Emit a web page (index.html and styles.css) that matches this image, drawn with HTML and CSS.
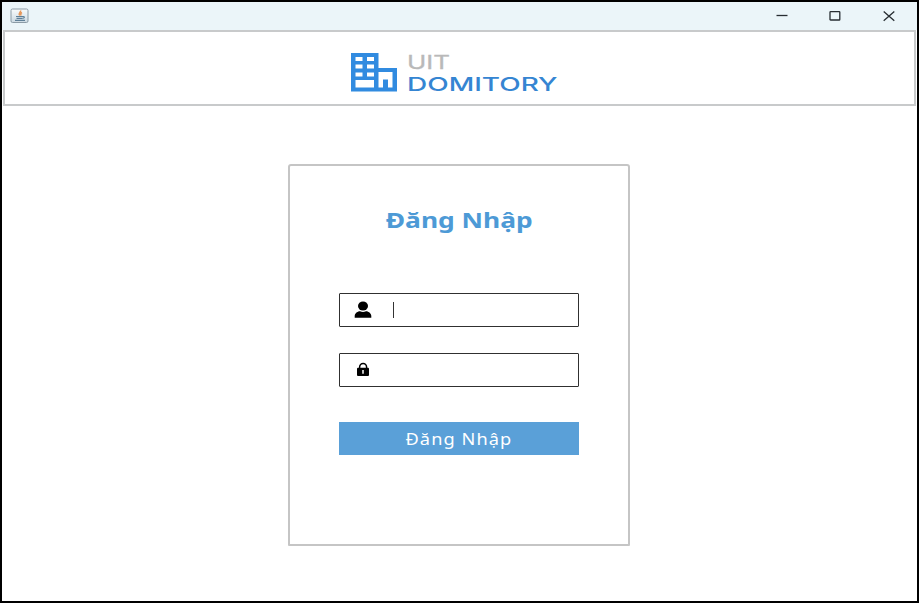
FILE: index.html
```
<!DOCTYPE html>
<html lang="vi">
<head>
<meta charset="utf-8">
<title>UIT Domitory</title>
<link rel="stylesheet" href="styles.css">
</head>
<body>
<div class="window">
  <div class="titlebar">
    <svg class="app-icon" width="20" height="16" viewBox="0 0 20 16">
      <defs><linearGradient id="tile" x2="0" y2="1"><stop stop-color="#f8fbfc"/><stop offset="1" stop-color="#cbd9e2"/></linearGradient></defs>
      <rect x="1" y="1" width="17" height="13.5" rx="1.5" fill="url(#tile)" stroke="#8b9ba6"/>
      <path d="M10.5 2.5c1 1.5-2.8 2.5-.8 5M12 4.5c-1.5.8-1.8 1.5-.7 3" fill="none" stroke="#e5975b" stroke-width="1.5"/>
      <path d="M6 8.5h7.5c1.500 0 1 1.700-.8 1.700M6.500 10.300h6M5 12.400h10" fill="none" stroke="#5f8098" stroke-width="1.200"/>
    </svg>
    <div class="controls">
      <svg width="12" height="12" viewBox="0 0 12 12"><path d="M.5 5.500h11"/></svg>
      <svg width="12" height="12" viewBox="0 0 12 12"><rect x="1" y="1.700" width="9.800" height="8.300" rx=".6"/></svg>
      <svg width="12" height="12" viewBox="0 0 12 12"><path d="M.7 1.400l10.600 9.400M11.300 1.400L.7 10.800"/></svg>
    </div>
  </div>
  <header class="header">
    <svg class="building" width="48" height="41" viewBox="0 0 48 41">
      <path fill="#318be0" fill-rule="evenodd" d="M1 1H28.500V16H47V39.500H1ZM5.500 5V9H12.500V5ZM17 5V9H24V5ZM5.500 12.500V16.500H12.500V12.500ZM17 12.500V16.500H24V12.500ZM5.500 20.500V24.500H12.500V20.500ZM17 20.500V24.500H24V20.500ZM5.500 28V35.500H24V28ZM28.500 20V35.500H33V27.500H38V35.500H42.500V20Z"/>
    </svg>
    <svg class="wordmark" width="154" height="44" viewBox="0 0 154 44">
      <text class="word-top" x="0" y="16.500" textLength="43" lengthAdjust="spacingAndGlyphs">UIT</text>
      <text class="word-main" x="0" y="39.200" textLength="150.500" lengthAdjust="spacingAndGlyphs">DOMITORY</text>
    </svg>
  </header>
  <main class="content">
    <form class="card">
      <h1 class="title"><span>Đăng Nhập</span></h1>
      <div class="field">
        <svg width="18" height="18" viewBox="0 0 18 18"><ellipse cx="9" cy="5" rx="5" ry="4.600"/><path d="M.7 16.700v-2C1.200 11.500 4 10.500 6 10.300q3 1.500 6 0c2 .2 4.800 1.200 5.300 4.400v2Z"/></svg>
        <span class="caret"></span>
      </div>
      <div class="field">
        <svg width="18" height="18" viewBox="0 0 18 18"><path d="M5.600 8V6.200a3.500 3.700 0 0 1 7 0V8" fill="none" stroke="#000" stroke-width="1.500"/><rect x="3" y="6.800" width="12" height="8.200" rx="1"/><path d="M9 9v3.800" stroke="#fff" stroke-width="1.500"/></svg>
      </div>
      <button class="submit" type="button"><span>Đăng Nhập</span></button>
    </form>
  </main>
</div>
</body>
</html>
```
FILE: styles.css
```
* { box-sizing: border-box; }

body {
  margin: 0;
  font-family: "Noto Sans", "Open Sans", sans-serif;
}

.window {
  display: flex;
  flex-direction: column;
  height: 603px;
  border: 2px solid #000;
  background: #fff;
}

.titlebar {
  display: flex;
  flex: none;
  align-items: center;
  justify-content: space-between;
  height: 28px;
  padding: 0 22.500px 0 8px;
  background: #ebf5f9;
}

.app-icon { display: block; }

.controls {
  display: flex;
  gap: 41.500px;
}

.controls svg {
  fill: none;
  stroke: #272d32;
  stroke-width: 1.300;
}

.header {
  display: flex;
  flex: none;
  justify-content: center;
  height: 76px;
  margin: 0 1px;
  padding: 20px 10px 0 0;
  border: 2px solid #c8cacb;
}

.building { margin: 0 9px 0 1px; }

.wordmark {
  overflow: visible;
  font-family: "Inter", sans-serif;
}

.word-top {
  fill: #b9b9b9;
  stroke: #b9b9b9;
  stroke-width: .300;
  font-size: 18.500px;
}

.word-main {
  fill: #3585d2;
  font-size: 18.500px;
  font-weight: 500;
}

.content {
  display: flex;
  justify-content: center;
  padding: 58px 1px 0 0;
}

.card {
  display: flex;
  flex-direction: column;
  width: 342px;
  height: 382px;
  padding: 37px 49px 0;
  border: 2px solid #c5c5c5;
  border-radius: 3px 3px 1px 1px;
}

.title {
  display: flex;
  justify-content: center;
  height: 33px;
  margin: 0 0 57px;
  color: #4d9ad6;
  font-size: 22px;
  font-weight: 700;
  line-height: 33px;
}

.title span {
  flex: none;
  transform: scaleX(1.200);
}

.field {
  display: flex;
  flex: none;
  align-items: center;
  height: 34px;
  margin-bottom: 26px;
  padding-left: 14px;
  border: 1px solid #303030;
  border-radius: 1px;
}

.caret {
  width: 1px;
  height: 16px;
  margin-left: 21px;
  background: #333;
}

.submit {
  flex: none;
  height: 33px;
  margin-top: 9px;
  padding: 0;
  border: 0;
  background: #5aa0d8;
  color: #fff;
  font: 400 17px/33px "Noto Sans", sans-serif;
}

.submit span {
  display: inline-block;
  letter-spacing: 1px;
  transform: scaleX(1.070);
}
```
